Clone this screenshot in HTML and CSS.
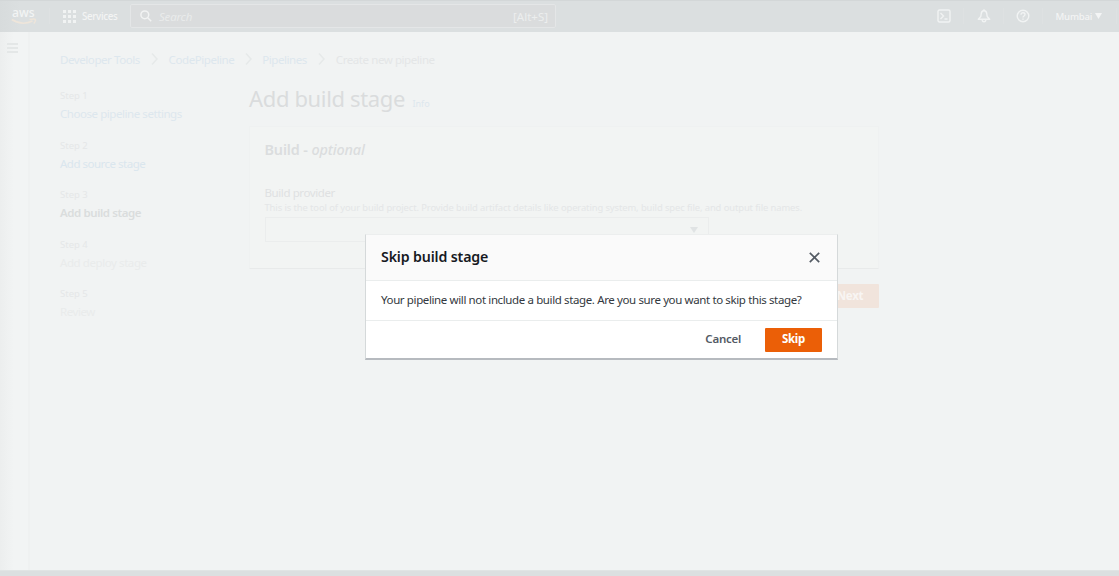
FILE: index.html
```html
<!DOCTYPE html>
<html lang="en">
<head>
<meta charset="utf-8">
<title>Add build stage</title>
<link rel="stylesheet" href="styles.css">
</head>
<body>
<header class="topbar">
  <svg class="logo" width="28" height="28" viewBox="0 0 28 28"><text class="logo-text" x="1" y="15" textLength="22.5" lengthAdjust="spacingAndGlyphs">aws</text><path d="M0.8 17.5Q11 24 21.5 19M18.5 17.6Q24.5 16.3 24.5 18Q24.3 20 22.8 21.5" fill="none" stroke="#eee5da" stroke-width="1.5"/></svg>
  <span class="rule rule-logo"></span>
  <svg class="grid" width="13" height="13" viewBox="0 0 13 13" fill="#f1f3f3"><path d="M0 0h3v3H0zM5 0h3v3H5zM10 0h3v3h-3zM0 5h3v3H0zM5 5h3v3H5zM10 5h3v3h-3zM0 10h3v3H0zM5 10h3v3H5zM10 10h3v3h-3z"/></svg>
  <span class="services">Services</span>
  <div class="search">
    <svg width="12" height="12" viewBox="0 0 12 12" fill="none" stroke="#f2f3f3" stroke-width="1.5"><circle cx="4.8" cy="4.8" r="3.9"/><path d="M7.7 7.7l3.5 3.5"/></svg>
    <i class="placeholder">Search</i>
    <span class="shortcut">[Alt+S]</span>
  </div>
  <nav class="tools">
    <svg width="14" height="14" viewBox="0 0 14 14" fill="none" stroke="#f1f3f3" stroke-width="1.4"><rect x="1" y="1" width="12" height="12" rx="1.5"/><path d="M3.5 4l3 3-3 3M7.5 10h3"/></svg>
    <span class="rule"></span>
    <svg width="14" height="14" viewBox="0 0 14 14" fill="none" stroke="#f1f3f3" stroke-width="1.4" stroke-linejoin="round"><path d="M7 1.5C5.2 1.8 4.3 3 4.2 5L3.8 7.5 1.3 10.2h11.4L10.2 7.5 9.8 5C9.7 3 8.8 1.8 7 1.5zM5.2 10.5c0 3 3.6 3 3.6 0M7 .3v1.5"/></svg>
    <span class="rule"></span>
    <svg width="14" height="14" viewBox="0 0 14 14" fill="none" stroke="#f1f3f3" stroke-width="1.4"><circle cx="7" cy="7" r="5.8"/><path d="M5 5.7c0-2.6 4-2.4 4-.2C9 7 7 7 7 8.5M7 9.5v1.3"/></svg>
    <span class="rule"></span>
    <span class="region">Mumbai</span>
    <svg class="caret" width="7" height="6" viewBox="0 0 7 6"><path d="M0 0h7L3.5 6z" fill="#f4f5f5"/></svg>
    <span class="rule rule-end"></span>
  </nav>
</header>
<div class="shell">
  <aside class="rail"><svg width="11" height="10" viewBox="0 0 11 10" fill="#e4e7e7"><path d="M0 0h11v2H0zM0 4h11v2H0zM0 8h11v2H0z"/></svg></aside>
  <div class="page">
    <nav class="crumbs">
      <a class="crumb tools-crumb">Developer Tools</a>
      <svg class="chevron" width="7" height="12" viewBox="0 0 7 12"><path d="M1 .5L6 6 1 11.5"/></svg>
      <a class="crumb code-crumb">CodePipeline</a>
      <svg class="chevron" width="7" height="12" viewBox="0 0 7 12"><path d="M1 .5L6 6 1 11.5"/></svg>
      <a class="crumb pipes-crumb">Pipelines</a>
      <svg class="chevron" width="7" height="12" viewBox="0 0 7 12"><path d="M1 .5L6 6 1 11.5"/></svg>
      <span class="crumb current">Create new pipeline</span>
    </nav>
    <div class="columns">
      <ol class="steps">
        <li class="step"><small>Step 1</small><a>Choose pipeline settings</a></li>
        <li class="step"><small>Step 2</small><a>Add source stage</a></li>
        <li class="step"><small>Step 3</small><b>Add build stage</b></li>
        <li class="step"><small>Step 4</small><span>Add deploy stage</span></li>
        <li class="step"><small>Step 5</small><span>Review</span></li>
      </ol>
      <main class="content">
        <div class="heading"><h1>Add build stage</h1><a class="info">Info</a></div>
        <section class="card">
          <h2>Build - <i>optional</i></h2>
          <div class="label">Build provider</div>
          <div class="hint">This is the tool of your build project. Provide build artifact details like operating system, build spec file, and output file names.</div>
          <div class="select"><svg width="8" height="6" viewBox="0 0 8 6"><path d="M0 0h8L4 6z" fill="#e0e3e4"/></svg></div>
        </section>
        <div class="actions"><span class="next">Next</span></div>
      </main>
    </div>
  </div>
</div>
<footer class="bottombar"></footer>
<div class="modal" role="dialog">
  <div class="modal-head"><h3>Skip build stage</h3><svg width="11" height="11" viewBox="0 0 11 11"><path d="M.8.8l9.4 9.4M10.2.8L.8 10.2" stroke="#545b64" stroke-width="1.7"/></svg></div>
  <div class="modal-body"><span>Your pipeline will not include a build stage. Are you sure you want to skip this stage?</span></div>
  <div class="modal-foot"><span class="cancel">Cancel</span><span class="skip">Skip</span></div>
</div>
</body>
</html>
```
FILE: styles.css
```css
* { box-sizing: border-box; }
body { margin: 0; width: 1119px; height: 576px; overflow: hidden; display: flex; flex-direction: column; background: #f1f3f3; font-family: "Noto Sans", "Open Sans", sans-serif; font-size: 11.5px; white-space: nowrap; }
h1, h2, h3, ol { margin: 0; padding: 0; font-weight: 400; }
svg { display: block; flex: none; }
.topbar { height: 32px; flex: none; display: flex; align-items: center; padding-bottom: 1px; background: linear-gradient(90deg, #d7dbdc, #dbdfe0 20px); border-top: 1px solid #d3d7d8; }
.logo { margin-left: 11px; }
.logo-text { font: 500 13px "Noto Sans", sans-serif; fill: #f2f4f4; }
.rule { width: 1px; height: 16px; flex: none; background: #dee1e2; }
.rule-logo { margin-left: 10px; }
.grid { margin-left: 13px; }
.services { margin-left: 6px; width: 36px; flex: none; font-size: 9.8px; font-weight: 500; color: #f3f4f4; letter-spacing: -.35px; }
.search { margin-left: 12px; width: 426px; flex: none; height: 24px; padding: 0 7px 0 9px; display: flex; align-items: center; border: 1px solid #e4e6e7; border-radius: 2px; background: #dadcdd; }
.placeholder { margin-left: 7px; color: #e9ebeb; letter-spacing: -.2px; }
.shortcut { margin-left: auto; color: #eceeee; letter-spacing: 0; }
.tools { margin-left: 381px; display: flex; align-items: center; }
.tools .rule { margin: 0 12.5px 0 12px; }
.tools .rule-end { margin: 0 0 0 14px; }
.region { width: 35px; color: #f3f4f4; font-size: 9.6px; font-weight: 500; letter-spacing: -.2px; }
.caret { margin-left: 4px; }
.shell { flex: 1; display: flex; min-height: 0; }
.rail { width: 30px; flex: none; padding: 11px 0 0 7px; background: linear-gradient(90deg, #eceeee, #f2f4f4 14px); border-right: 2px solid #eff1f1; }
.page { padding: 19px 0 0 30px; }
.crumbs { display: flex; align-items: center; height: 16px; color: #dde7ee; }
.crumb { letter-spacing: -.42px; }
.tools-crumb { width: 81px; }
.code-crumb { width: 66px; }
.pipes-crumb { width: 46px; }
.current { color: #e4e6e7; }
.chevron { margin: 0 10.3px; fill: none; stroke: #e6e9e9; stroke-width: 1.5; }
.columns { display: flex; }
.steps { width: 124px; padding-top: 21px; list-style: none; }
.step { height: 49.5px; display: flex; flex-direction: column; color: #e9ebeb; line-height: 16px; letter-spacing: -.42px; }
.step:first-child a { color: #dde7ee; letter-spacing: -.44px; }
.step small { height: 18px; line-height: 16px; font-size: 9.5px; color: #e5e7e8; letter-spacing: 0; }
.step a { color: #dae6ee; letter-spacing: -.5px; }
.step b { color: #dadddd; font-weight: 600; letter-spacing: -.42px; }
.step:nth-child(2) { background: linear-gradient(#eff1f1, #eff1f1) 0 0 / 100% 1px no-repeat; background-position: 0 -17px; }
.content { width: 630px; margin-left: 65px; }
.heading { display: flex; align-items: baseline; height: 59px; padding-top: 17px; }
h1 { font-size: 22px; line-height: 28px; color: #dadcdd; width: 163.5px; letter-spacing: -.35px; }
.info { font-size: 9px; color: #dde7ee; }
.card { height: 143px; padding: 13px 14.5px 0; background: #f2f4f3; border: 1px solid #eff1f1; border-bottom-color: #e8eaea; }
h2 { font-size: 14.4px; font-weight: 600; line-height: 20px; color: #dbddde; letter-spacing: -.13px; }
h2 i { font-weight: 500; }
.label { margin-top: 25px; line-height: 16px; color: #dfe1e2; letter-spacing: -.4px; }
.hint { line-height: 13px; font-size: 9.4px; letter-spacing: -.09px; color: #e4e6e7; }
.select { margin-top: 3px; width: 444.5px; height: 25px; display: flex; align-items: center; justify-content: flex-end; padding-right: 10px; border: 1px solid #ebeded; }
.actions { display: flex; justify-content: flex-end; margin-top: 15px; }
.next { width: 58px; height: 24px; line-height: 23px; text-align: center; background: #f1e4dc; color: #f8f5f3; font-weight: 700; border-radius: 1px; letter-spacing: -.3px; }
.bottombar { height: 6px; flex: none; background: #dbdfe0; border-top: 1px solid #e0e4e4; }
.modal { position: absolute; left: 365px; top: 234px; width: 473px; height: 126px; background: #fff; border: 1px solid #d5d9da; border-top-color: #eceeee; border-bottom: 2px solid #b6babf; }
.modal-head { height: 46px; padding: 0 17px 0 15px; display: flex; align-items: center; justify-content: space-between; background: #fafafa; border-bottom: 1px solid #eaeded; }
h3 { font-size: 14.2px; font-weight: 600; line-height: 20px; margin-bottom: 1px; color: #16191f; letter-spacing: -.14px; }
.modal-body { height: 40px; padding-left: 15px; line-height: 37px; color: #333940; letter-spacing: -.378px; border-bottom: 1px solid #eaeded; }
.modal-foot { display: flex; justify-content: flex-end; padding: 7px 15px 0 0; font-weight: 600; line-height: 22px; letter-spacing: -.25px; }
.cancel { margin-right: 24px; color: #545b64; }
.skip { width: 57px; height: 24px; text-align: center; font-weight: 700; color: #fff; background: #eb5f07; border-radius: 1px; }
```
